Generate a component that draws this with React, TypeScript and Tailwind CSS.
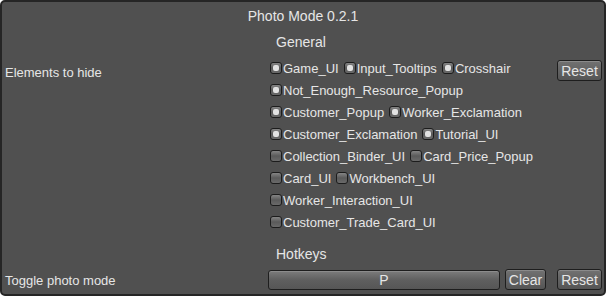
const rows: { label: string; on: boolean }[][] = [
  [
    { label: 'Game_UI', on: true },
    { label: 'Input_Tooltips', on: true },
    { label: 'Crosshair', on: true },
  ],
  [{ label: 'Not_Enough_Resource_Popup', on: true }],
  [
    { label: 'Customer_Popup', on: true },
    { label: 'Worker_Exclamation', on: true },
  ],
  [
    { label: 'Customer_Exclamation', on: true },
    { label: 'Tutorial_UI', on: true },
  ],
  [
    { label: 'Collection_Binder_UI', on: false },
    { label: 'Card_Price_Popup', on: false },
  ],
  [
    { label: 'Card_UI', on: false },
    { label: 'Workbench_UI', on: false },
  ],
  [{ label: 'Worker_Interaction_UI', on: false }],
  [{ label: 'Customer_Trade_Card_UI', on: false }],
]

function Toggle({ label, on }: { label: string; on: boolean }) {
  return (
    <div className="flex items-center gap-[1px]">
      <div className="flex h-[12px] w-[12px] items-center justify-center rounded-[3px] border border-[#1c1c1c] bg-gradient-to-b from-[#858585] via-[#5a5a5a] to-[#6a6a6a]">
        {on && <div className="h-[6px] w-[6px] rounded-[2px] bg-[#e2e2e2]" />}
      </div>
      <span>{label}</span>
    </div>
  )
}

function Button({ children, width }: { children: string; width: string }) {
  return (
    <div
      className={`flex h-[21px] items-center justify-center rounded-[3px] border border-[#1e1e1e] bg-gradient-to-b from-[#727272] to-[#555555] text-[14px] shadow-[inset_0_1px_0_#8a8a8a] ${width}`}
    >
      {children}
    </div>
  )
}

export default function App() {
  return (
    <div className="box-border flex h-[296px] w-[606px] flex-col rounded-[5px] border-2 border-[#252525] bg-[#505050] font-['Liberation_Sans',Arial,sans-serif] text-[13px] leading-none text-[#e6e6e6]">
      <div className="flex h-[28px] shrink-0 items-center justify-center text-[14px]">
        Photo Mode 0.2.1
      </div>
      <div className="flex h-[24px] shrink-0 items-center pl-[274px] text-[14px]">
        General
      </div>

      <div className="mt-[3px] flex">
        <div className="w-[266px] pl-[3px] pt-[9px]">Elements to hide</div>
        <div className="flex flex-1 flex-col pl-[2px]">
          {rows.map((row, i) => (
            <div key={i} className="flex h-[22px] items-center gap-[5px]">
              {row.map((t) => (
                <Toggle key={t.label} label={t.label} on={t.on} />
              ))}
            </div>
          ))}
        </div>
        <div className="pr-[2px] pt-[3px]">
          <Button width="w-[45px]">Reset</Button>
        </div>
      </div>

      <div className="mt-[9px] flex h-[24px] shrink-0 items-center pl-[274px] text-[14px]">
        Hotkeys
      </div>

      <div className="mt-[3px] flex items-center">
        <div className="w-[266px] pl-[3px] pt-[2px]">Toggle photo mode</div>
        <div className="flex h-[20px] w-[232px] items-center justify-center rounded-[3px] border border-[#1e1e1e] bg-gradient-to-b from-[#7c7c7c] via-[#5f5f5f] to-[#565656] text-[14px] shadow-[inset_0_1px_0_#8c8c8c]">
          P
        </div>
        <div className="ml-[5px]">
          <Button width="w-[41px]">Clear</Button>
        </div>
        <div className="ml-[11px] pr-[2px]">
          <Button width="w-[45px]">Reset</Button>
        </div>
      </div>
    </div>
  )
}
